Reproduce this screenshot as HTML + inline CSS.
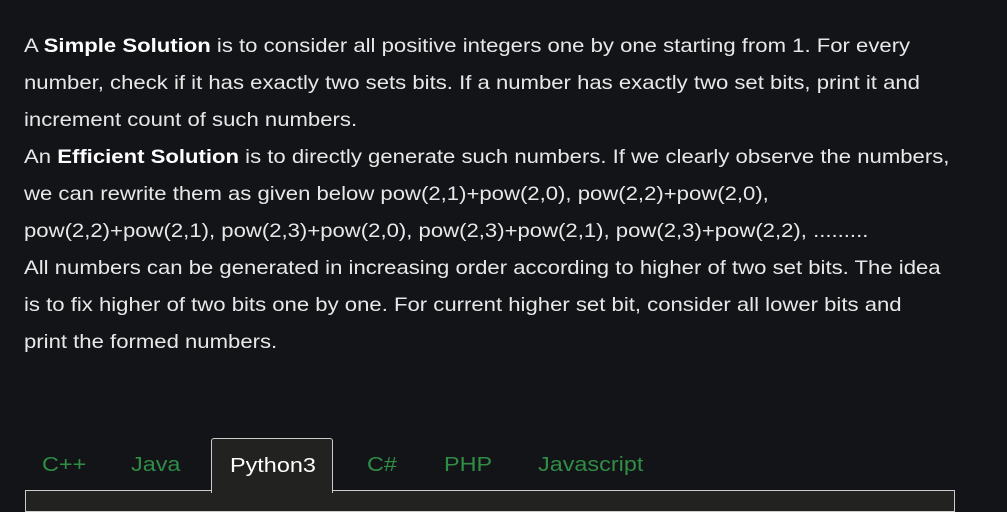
<!DOCTYPE html>
<html><head><style>
body{margin:0;background:#131417;width:1007px;height:500px;overflow:hidden;font-family:"Liberation Sans",sans-serif;}
.t{position:absolute;left:24px;top:28px;color:#e8e8e8;font-size:19.5px;line-height:37px;white-space:nowrap;transform:scaleX(1.134);transform-origin:0 0;}
b{color:#fff}
.tab{position:absolute;top:454px;font-size:20px;color:#2f8d46;transform:scaleX(1.17);transform-origin:0 0;}
.act{position:absolute;left:211px;top:438px;width:120px;height:54px;background:#222220;border:1px solid #ccc;border-bottom:none;border-radius:3px 3px 0 0;z-index:2;}
.act span{position:absolute;left:18px;top:16px;color:#fff;font-size:20px;transform:scaleX(1.17);transform-origin:0 0;}
.panel{position:absolute;left:25px;top:490px;width:928px;height:20px;border:1px solid #ccc;background:#222220;}
</style></head><body>
<div class="t">A <b>Simple Solution</b> is to consider all positive integers one by one starting from 1. For every<br>number, check if it has exactly two sets bits. If a number has exactly two set bits, print it and<br>increment count of such numbers.<br>An <b>Efficient Solution</b> is to directly generate such numbers. If we clearly observe the numbers,<br>we can rewrite them as given below pow(2,1)+pow(2,0), pow(2,2)+pow(2,0),<br>pow(2,2)+pow(2,1), pow(2,3)+pow(2,0), pow(2,3)+pow(2,1), pow(2,3)+pow(2,2), .........<br>All numbers can be generated in increasing order according to higher of two set bits. The idea<br>is to fix higher of two bits one by one. For current higher set bit, consider all lower bits and<br>print the formed numbers.</div>
<div class="panel"></div>
<span class="tab" style="left:42px">C++</span>
<span class="tab" style="left:131px">Java</span>
<div class="act"><span>Python3</span></div>
<span class="tab" style="left:367px">C#</span>
<span class="tab" style="left:444px">PHP</span>
<span class="tab" style="left:538px">Javascript</span>
</body></html>
